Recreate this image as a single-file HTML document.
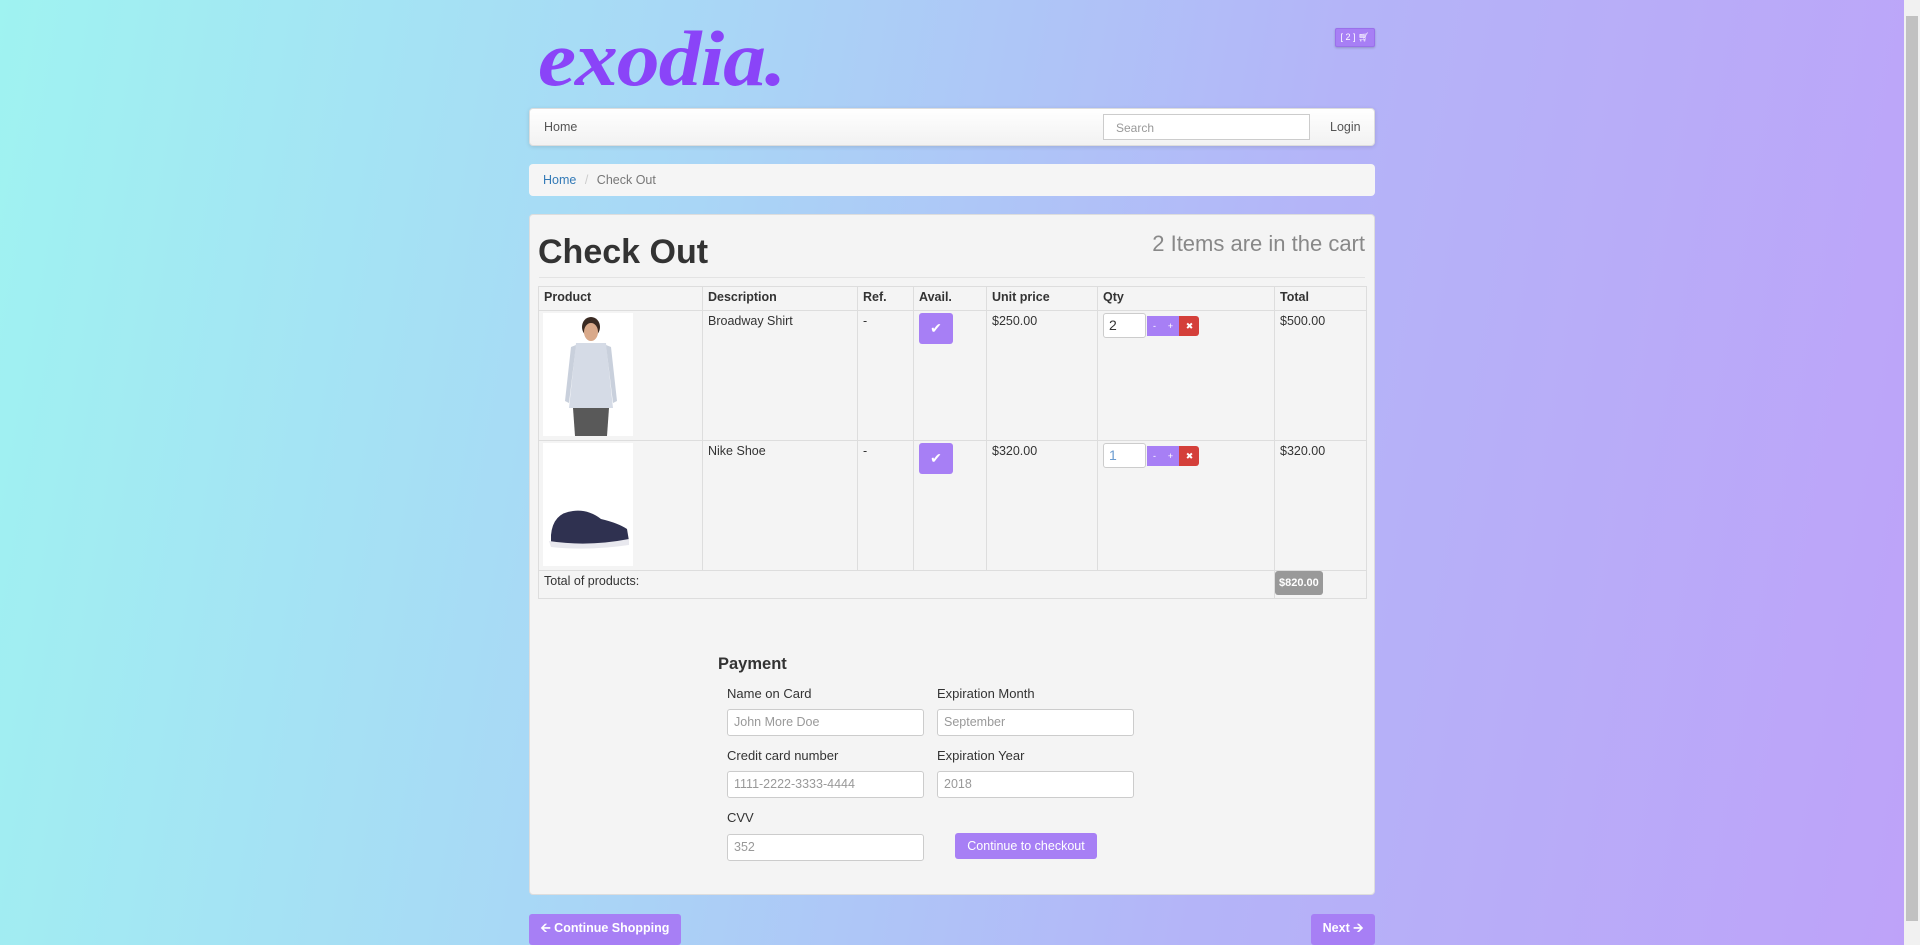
<!DOCTYPE html>
<html><head><meta charset="utf-8"><style>
*{box-sizing:border-box;margin:0;padding:0}
html,body{width:1920px;height:945px;overflow:hidden}
body{font-family:"Liberation Sans",Arial,sans-serif;font-size:12.5px;color:#333;background:linear-gradient(100deg,#9ff3f1 0%,#a9d6f6 35%,#b4b4f8 65%,#bea2f9 100%);position:relative}
.abs{position:absolute}
.sb{position:absolute;right:0;top:0;width:16px;height:945px;background:#f1f1f1}
.sb div{position:absolute;left:2px;right:2px;top:16px;height:905px;background:#c1c1c1}
.logo{left:538px;top:14px;font-family:"Liberation Serif",serif;font-style:italic;font-weight:bold;font-size:78px;color:#8a44f8;letter-spacing:-1px;transform:scaleX(1.1);transform-origin:left top}
.cart{left:1335px;top:28px;width:40px;height:19px;background:#a77ff5;border:1px solid #9a70ea;border-radius:2px;color:#fff;font-size:9px;text-align:center;line-height:17px;box-shadow:0 1px 2px rgba(0,0,0,.2)}
.nav{left:529px;top:108px;width:846px;height:38px;background:linear-gradient(#fff,#f2f2f2);border:1px solid #ddd;border-radius:4px;box-shadow:0 1px 4px rgba(0,0,0,.12)}
.nav .h{position:absolute;left:14px;top:11px;color:#555;font-size:12.5px}
.nav .s{position:absolute;left:573px;top:5px;width:207px;height:26px;border:1px solid #ccc;background:#fff;color:#999;font-size:12px;padding:6px 12px}
.nav .l{position:absolute;left:800px;top:11px;color:#555}
.bc{left:529px;top:164px;width:846px;height:32px;background:#f5f5f5;border-radius:4px;padding:9px 14px;font-size:12.5px;color:#777}
.bc a{color:#337ab7}
.panel{left:529px;top:214px;width:846px;height:681px;background:#f4f4f4;border:1px solid #ddd;border-radius:4px}
h1{position:absolute;left:8px;top:18px;font-size:34px;font-weight:bold;color:#333}
.cnt{position:absolute;right:9px;top:16px;font-size:22px;color:#888}
.hr{position:absolute;left:9px;right:9px;top:62px;border-top:1px solid #e3e3e3}
table{position:absolute;left:8px;top:71px;width:829px;border-collapse:collapse;border:1px solid #ddd}
td,th{border:1px solid #ddd;text-align:left;vertical-align:top;padding:3px 5px;font-size:12.5px}
th{height:24px;font-weight:bold}
tr.r td{height:130px}
tr.r2 td{height:130px}
.img{width:90px;height:123px;background:#fff;position:relative;margin:-1px 0 0 -1px}
.chk{width:34px;height:31px;background:#a77ff5;border-radius:3px;color:#fff;text-align:center;line-height:31px;font-size:14px;margin-top:-1px}
.qi{display:inline-block;width:43px;height:25px;border:1px solid #ccc;border-radius:3px;background:#fff;padding:3px 5px;font-size:14px;vertical-align:top;margin-top:-1px}
.qb{display:inline-block;vertical-align:top;margin-top:2px;height:20px;color:#fff;font-size:9px;line-height:20px;text-align:center}
.badge{display:inline-block;background:#999;color:#fff;font-weight:bold;font-size:11px;padding:0 4px;height:24px;line-height:24px;border-radius:3px;margin:-3px 0 0 -5px}
.pay{position:absolute;left:188px;top:440px;font-size:16.5px;font-weight:bold}
.lab{position:absolute;font-size:13px;color:#333}
.inp{position:absolute;width:197px;height:27px;background:#fff;border:1px solid #ccc;border-radius:3px;color:#999;font-size:12.5px;padding:5px 6px}
.btn{position:absolute;background:#a77ff5;color:#fff;border-radius:3px;font-size:12.5px;text-align:center}
</style></head><body>
<div class="abs logo">exodia.</div>
<div class="abs cart">[ 2 ] &#x1F6D2;&#xFE0E;</div>
<div class="abs nav"><span class="h">Home</span><div class="s">Search</div><span class="l">Login</span></div>
<div class="abs bc"><a>Home</a> <span style="color:#ccc;padding:0 5px">/</span> Check Out</div>
<div class="abs panel">
<h1>Check Out</h1><div class="cnt">2 Items are in the cart</div><div class="hr"></div>
<table>
<tr><th style="width:164px">Product</th><th style="width:155px">Description</th><th style="width:56px">Ref.</th><th style="width:73px">Avail.</th><th style="width:111px">Unit price</th><th style="width:177px">Qty</th><th>Total</th></tr>
<tr class="r"><td><div class="img"><svg width="90" height="123"><ellipse cx="48" cy="14" rx="9" ry="10" fill="#3a2a22"/><ellipse cx="48" cy="19" rx="7" ry="9" fill="#d9a98a"/><path d="M33 30 L63 30 L70 95 L26 95 Z" fill="#d5dbe6"/><path d="M33 32 L26 90 L22 88 L28 34Z M63 32 L70 90 L74 88 L68 34Z" fill="#c9d0dc"/><path d="M30 95 L66 95 L64 123 L32 123Z" fill="#595959"/></svg></div></td><td>Broadway Shirt</td><td>-</td><td><div class="chk">&#10004;</div></td><td>$250.00</td><td><span class="qi">2</span> <span class="qb" style="width:14px;background:#a77ff5;margin-left:-2px">-</span><span class="qb" style="width:18px;background:#a77ff5">+</span><span class="qb" style="width:20px;background:#d43f3a;border-radius:0 3px 3px 0">&#10006;</span></td><td>$500.00</td></tr>
<tr class="r2"><td><div class="img"><svg width="90" height="123"><path d="M8 92 Q10 70 30 68 Q45 66 58 76 Q75 80 84 86 L86 98 Q50 104 8 100Z" fill="#2f3150"/><path d="M6 98 Q45 104 86 96 L86 102 Q45 108 8 104Z" fill="#e8e8ee"/></svg></div></td><td>Nike Shoe</td><td>-</td><td><div class="chk">&#10004;</div></td><td>$320.00</td><td><span class="qi" style="color:#6a9bd0">1</span> <span class="qb" style="width:14px;background:#a77ff5;margin-left:-2px">-</span><span class="qb" style="width:18px;background:#a77ff5">+</span><span class="qb" style="width:20px;background:#d43f3a;border-radius:0 3px 3px 0">&#10006;</span></td><td>$320.00</td></tr>
<tr><td colspan="6" style="height:24px">Total of products:</td><td><span class="badge">$820.00</span></td></tr>
</table>
<div class="pay">Payment</div>
<div class="lab" style="left:197px;top:471px">Name on Card</div>
<div class="lab" style="left:407px;top:471px">Expiration Month</div>
<div class="inp" style="left:197px;top:494px">John More Doe</div>
<div class="inp" style="left:407px;top:494px">September</div>
<div class="lab" style="left:197px;top:533px">Credit card number</div>
<div class="lab" style="left:407px;top:533px">Expiration Year</div>
<div class="inp" style="left:197px;top:556px">1111-2222-3333-4444</div>
<div class="inp" style="left:407px;top:556px">2018</div>
<div class="lab" style="left:197px;top:595px">CVV</div>
<div class="inp" style="left:197px;top:619px">352</div>
<div class="btn" style="left:425px;top:618px;width:142px;height:26px;line-height:26px">Continue to checkout</div>
</div>
<div class="btn" style="left:529px;top:914px;width:152px;height:31px;line-height:28px;font-weight:bold">&#129128; Continue Shopping</div>
<div class="btn" style="left:1311px;top:914px;width:64px;height:31px;line-height:28px;font-weight:bold">Next &#129130;</div>
<div class="sb"><div></div></div>
</body></html>
